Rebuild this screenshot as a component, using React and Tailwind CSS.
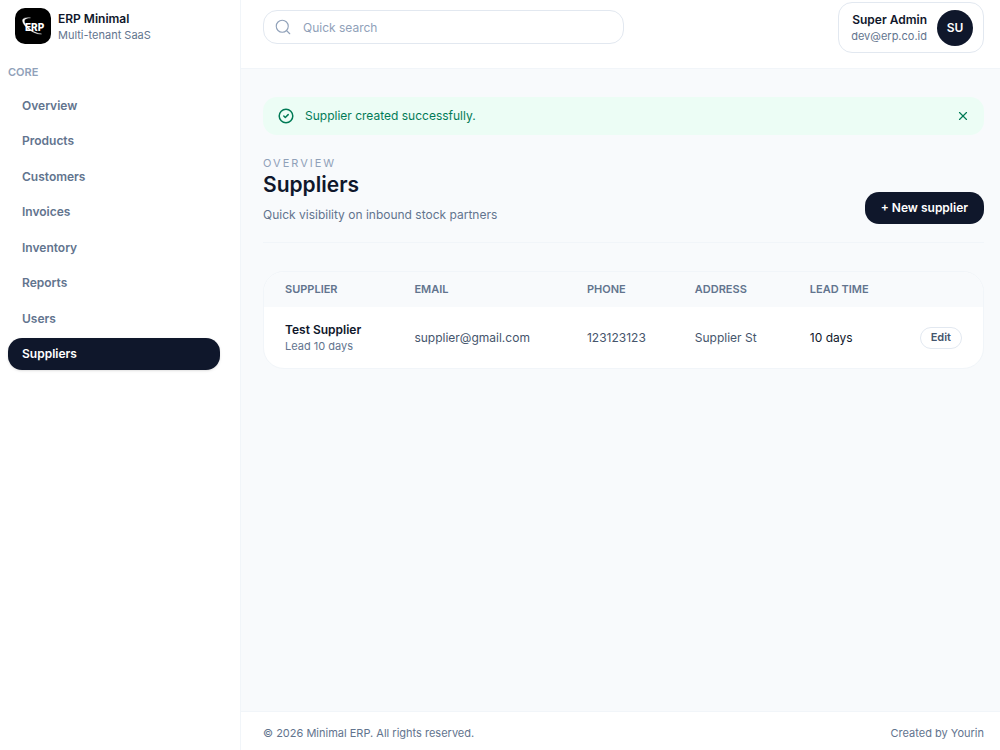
import { useState } from 'react';
import { Search, X } from 'lucide-react';

const navItems = [
  'Overview',
  'Products',
  'Customers',
  'Invoices',
  'Inventory',
  'Reports',
  'Users',
  'Suppliers',
];

const columns = [
  { label: 'Supplier', width: 'w-[18%]' },
  { label: 'Email', width: 'w-[24%]' },
  { label: 'Phone', width: 'w-[15%]' },
  { label: 'Address', width: 'w-[16%]' },
  { label: 'Lead time', width: 'w-[15%]' },
];

const suppliers = [
  {
    id: 1,
    name: 'Test Supplier',
    email: 'supplier@gmail.com',
    phone: '123123123',
    address: 'Supplier St',
    leadTime: 10,
  },
];

function Logo() {
  return (
    <svg viewBox="0 0 36 36" className="size-9 shrink-0" aria-hidden="true">
      <rect width="36" height="36" rx="10" fill="#000" />
      <text
        x="10"
        y="22.5"
        fill="#fff"
        fontFamily="Inter, sans-serif"
        fontSize="10"
        fontWeight="800"
      >
        ERP
      </text>
      <path
        d="M15.5 9.8C11 9.3 7.6 10 7.5 12.3c-.1 2.8 2.8 6.7 7.1 9.7 4.3 2.9 9 4.6 12 4-3.6-.2-7.6-2-11.2-4.8-3.7-2.9-6.2-6-6-8.4.1-1.9 2.5-2.7 6.1-3z"
        fill="#fff"
        stroke="#fff"
        strokeWidth="0.3"
      />
    </svg>
  );
}

function CheckIcon() {
  return (
    <svg
      viewBox="0 0 18 18"
      className="size-[18px] shrink-0"
      fill="none"
      stroke="currentColor"
      strokeWidth="1.5"
      strokeLinecap="round"
      strokeLinejoin="round"
      aria-hidden="true"
    >
      <circle cx="9" cy="9" r="6.8" />
      <path d="M6.8 9l1.5 1.5 2.9-2.9" />
    </svg>
  );
}

function Sidebar() {
  return (
    <aside className="w-[241px] shrink-0 border-r border-slate-100 bg-white px-2 pt-2">
      <div className="flex items-center gap-[7px] pl-[7px]">
        <Logo />
        <div className="pt-[2px]">
          <p className="text-xs leading-4 font-semibold text-slate-900">ERP Minimal</p>
          <p className="text-[11px] leading-4 text-slate-500">Multi-tenant SaaS</p>
        </div>
      </div>

      <p className="mt-5 text-[11px] leading-4 font-semibold uppercase text-slate-400">Core</p>
      <nav className="mt-[10px] mr-3 flex h-[280px] flex-col justify-between">
        {navItems.map((item) => (
          <a
            key={item}
            href="#"
            className={
              item === 'Suppliers'
                ? 'flex h-8 items-center rounded-[14px] bg-slate-900 px-[14px] text-xs font-semibold text-white shadow-sm'
                : 'flex h-8 items-center rounded-[14px] px-[14px] text-xs font-semibold text-slate-500 hover:bg-slate-50'
            }
          >
            {item}
          </a>
        ))}
      </nav>
    </aside>
  );
}

function Header() {
  return (
    <header className="flex h-[69px] items-start justify-between border-b border-slate-100 bg-white pt-[2px] pr-4 pl-[22px]">
      <div className="mt-2 flex h-[34px] w-1/2 items-center gap-[11px] rounded-[14px] border border-slate-200 bg-white px-[10px]">
        <Search size={18} strokeWidth={1.5} className="shrink-0 text-slate-400" />
        <input
          type="search"
          aria-label="Quick search"
          placeholder="Quick search"
          className="h-5 w-full bg-transparent text-xs text-slate-700 outline-none placeholder:text-slate-400"
        />
      </div>

      <button className="flex h-[51px] items-center gap-[10px] rounded-[14px] border border-slate-200 bg-white pr-[10px] pl-3">
        <span className="text-right">
          <span className="block text-xs leading-4 font-semibold text-slate-900">Super Admin</span>
          <span className="block text-[11px] leading-4 text-slate-500">dev@erp.co.id</span>
        </span>
        <span className="flex size-9 items-center justify-center rounded-full bg-slate-900 text-xs font-semibold text-white">
          SU
        </span>
      </button>
    </header>
  );
}

function Alert({ onClose }) {
  return (
    <div role="status" className="mb-5 flex h-[38px] items-center rounded-[14px] bg-emerald-50 px-[14px] text-emerald-700">
      <CheckIcon />
      <p className="ml-[10px] flex-1 text-xs">Supplier created successfully.</p>
      <button onClick={onClose} aria-label="Dismiss">
        <X size={14} strokeWidth={2} />
      </button>
    </div>
  );
}

function SuppliersTable() {
  return (
    <div className="mt-7 overflow-hidden rounded-[21px] border border-slate-100 bg-white">
      <table className="w-full text-left text-xs text-slate-600">
        <thead className="bg-slate-50 text-[11px] uppercase text-slate-500">
          <tr className="h-[35px]">
            {columns.map((column) => (
              <th key={column.label} className={`${column.width} px-[21px] font-semibold`}>
                {column.label}
              </th>
            ))}
            <th className="px-[21px]" aria-label="Actions" />
          </tr>
        </thead>
        <tbody>
          {suppliers.map((supplier) => (
            <tr key={supplier.id} className="h-[61px]">
              <td className="px-[21px]">
                <p className="leading-4 font-semibold text-slate-900">{supplier.name}</p>
                <p className="text-[11px] leading-4 text-slate-500">Lead {supplier.leadTime} days</p>
              </td>
              <td className="px-[21px]">{supplier.email}</td>
              <td className="px-[21px]">{supplier.phone}</td>
              <td className="px-[21px]">{supplier.address}</td>
              <td className="px-[21px] text-slate-900">{supplier.leadTime} days</td>
              <td className="px-[21px] text-right">
                <button className="h-[22px] rounded-full border border-slate-200 px-[10px] text-[11px] font-semibold text-slate-600">
                  Edit
                </button>
              </td>
            </tr>
          ))}
        </tbody>
      </table>
    </div>
  );
}

export default function App() {
  const [showAlert, setShowAlert] = useState(true);

  return (
    <div className="flex min-h-screen bg-slate-50 font-['Inter',sans-serif]">
      <Sidebar />
      <div className="flex min-w-0 flex-1 flex-col">
        <Header />
        <main className="flex-1 pt-7 pr-4 pl-[22px]">
          {showAlert && <Alert onClose={() => setShowAlert(false)} />}

          <div className="flex items-end justify-between border-b border-slate-100 pb-[18px]">
            <div>
              <p className="text-[11px] leading-4 uppercase tracking-[2px] text-slate-400">Overview</p>
              <h1 className="text-[21px] leading-7 font-semibold text-slate-900">Suppliers</h1>
              <p className="mt-2 mb-px text-xs leading-4 text-slate-500">Quick visibility on inbound stock partners</p>
            </div>
            <button className="h-8 rounded-[14px] bg-slate-900 px-4 text-xs font-semibold text-white">
              + New supplier
            </button>
          </div>

          <SuppliersTable />
        </main>
        <footer className="flex h-[39px] items-center justify-between border-t border-slate-100 bg-white pt-1 pr-4 pl-[22px] text-[11px] text-slate-500">
          <p>© 2026 Minimal ERP. All rights reserved.</p>
          <p>Created by Yourin</p>
        </footer>
      </div>
    </div>
  );
}
